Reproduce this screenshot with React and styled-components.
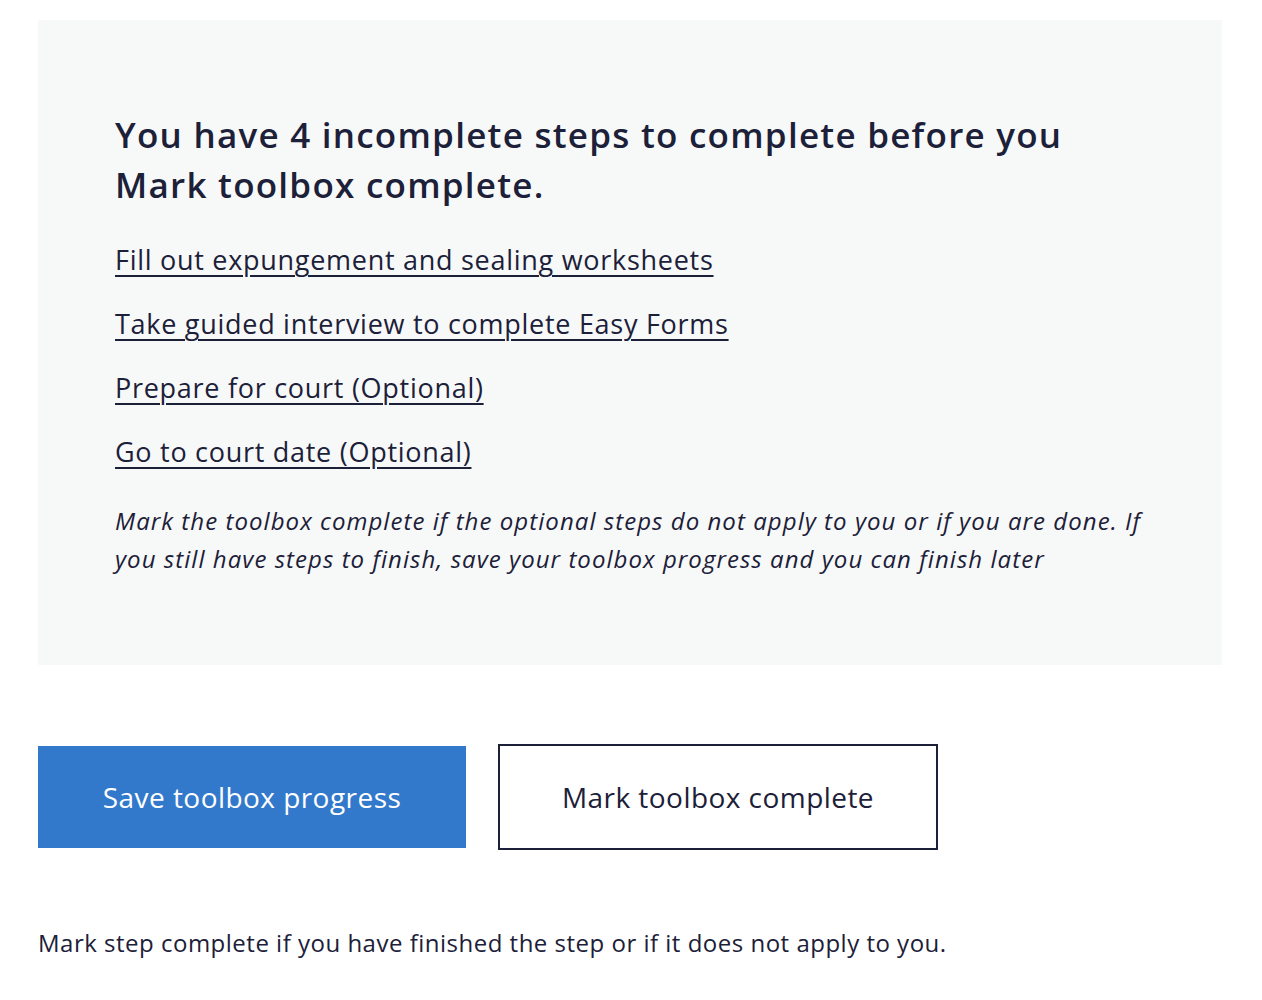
import styled, { createGlobalStyle } from "styled-components";

const GlobalStyle = createGlobalStyle`
  body {
    margin: 0;
    background: #ffffff;
    font-family: "Open Sans", Lato, sans-serif;
    color: #1c2038;
  }
`;

const Page = styled.div`
  padding: 20px 40px 40px 38px;
`;

const Panel = styled.section`
  background: #f7f9f9;
  padding: 90px 77px 87px 77px;
`;

const Heading = styled.h2`
  margin: 0 0 30px;
  font-size: 35px;
  line-height: 50px;
  font-weight: 600;
  letter-spacing: 1.25px;
`;

const StepList = styled.ul`
  list-style: none;
  margin: 0;
  padding: 0;
  display: flex;
  flex-direction: column;
  gap: 24px;
`;

const StepLink = styled.a`
  font-size: 27px;
  line-height: 40px;
  color: #1c2038;
  letter-spacing: 0.72px;
  text-decoration: underline;
  text-underline-offset: 5px;
  text-decoration-thickness: 2px;
`;

const Note = styled.p`
  margin: 30px 0 0;
  font-size: 24px;
  line-height: 38px;
  font-style: italic;
  letter-spacing: 1.05px;
`;

const Actions = styled.div`
  display: flex;
  align-items: center;
  gap: 32px;
  margin-top: 79px;
`;

const Button = styled.button`
  font-family: inherit;
  font-size: 28px;
  letter-spacing: 0.45px;
  cursor: pointer;
  background: ${(p) => (p.$primary ? "#3279cc" : "#ffffff")};
  color: ${(p) => (p.$primary ? "#ffffff" : "#1c2038")};
  border: ${(p) => (p.$primary ? "none" : "2px solid #1c2038")};
  width: ${(p) => (p.$primary ? "428px" : "440px")};
  height: ${(p) => (p.$primary ? "102px" : "106px")};
`;

const Hint = styled.p`
  margin: 75px 0 0;
  font-size: 24px;
  line-height: 36px;
  letter-spacing: 0.5px;
`;

const steps = [
  "Fill out expungement and sealing worksheets",
  "Take guided interview to complete Easy Forms",
  "Prepare for court (Optional)",
  "Go to court date (Optional)",
];

export default function App() {
  return (
    <>
      <GlobalStyle />
      <Page>
        <Panel>
          <Heading>
            You have 4 incomplete steps to complete before you
            <br />
            Mark toolbox complete.
          </Heading>
          <StepList>
            {steps.map((s) => (
              <li key={s}>
                <StepLink href="#">{s}</StepLink>
              </li>
            ))}
          </StepList>
          <Note>
            Mark the toolbox complete if the optional steps do not apply to you or if you are done. If
            <br />
            you still have steps to finish, save your toolbox progress and you can finish later
          </Note>
        </Panel>
        <Actions>
          <Button $primary>Save toolbox progress</Button>
          <Button>Mark toolbox complete</Button>
        </Actions>
        <Hint>Mark step complete if you have finished the step or if it does not apply to you.</Hint>
      </Page>
    </>
  );
}
